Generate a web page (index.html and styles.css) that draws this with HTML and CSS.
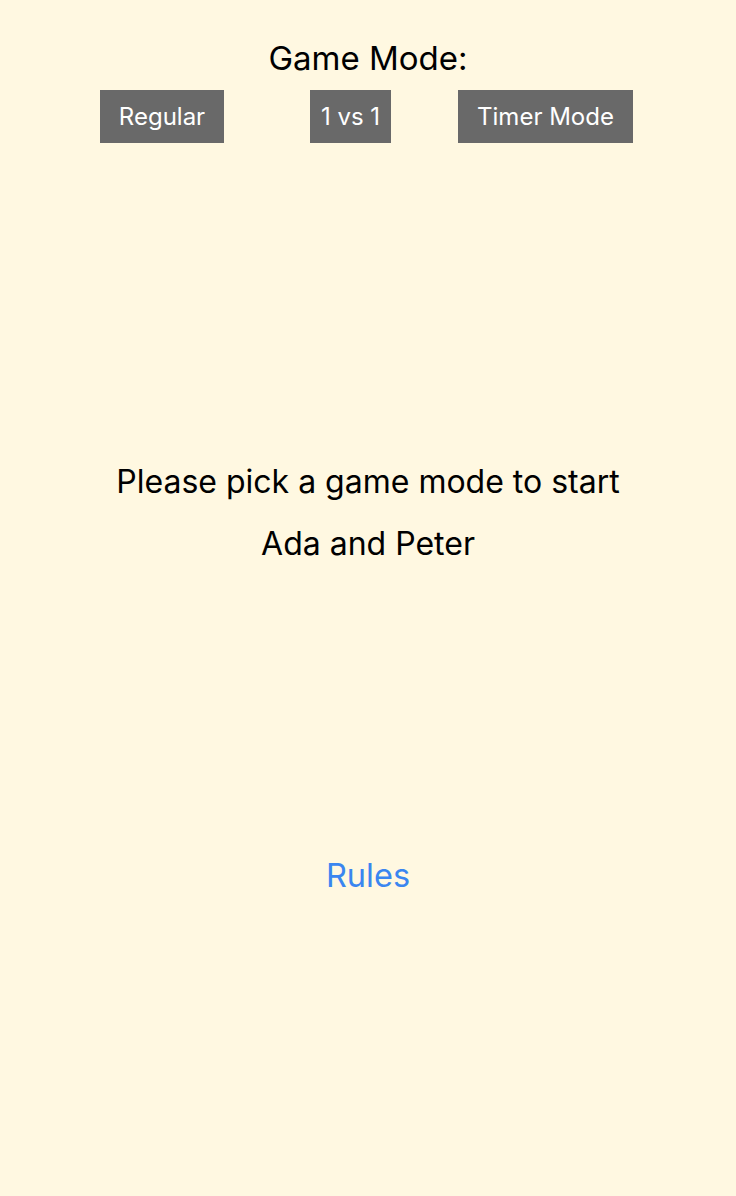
FILE: index.html
```html
<!DOCTYPE html>
<html>
<head>
<meta charset="utf-8">
<link rel="stylesheet" href="styles.css">
</head>
<body>
<main class="screen">
  <h1 class="title">Game Mode:</h1>
  <div class="modes">
    <button class="mode mode-regular">Regular</button>
    <button class="mode mode-vs">1 vs 1</button>
    <button class="mode mode-timer">Timer Mode</button>
  </div>
  <p class="prompt">Please pick a game mode to start</p>
  <p class="players">Ada and Peter</p>
  <a class="rules">Rules</a>
</main>
</body>
</html>
```

FILE: styles.css
```css
html, body {
  margin: 0;
  padding: 0;
  background: #fff8e1;
}
body {
  font-family: Inter, "Noto Sans", sans-serif;
  color: #000;
  width: 736px;
  height: 1196px;
}
.screen {
  display: flex;
  flex-direction: column;
  align-items: center;
}
.title {
  margin: 38px 0 0;
  font-size: 33px;
  font-weight: 400;
  line-height: 40px;
}
.modes {
  display: flex;
  align-self: stretch;
  padding-left: 100px;
  margin-top: 12px;
}
.mode {
  height: 53px;
  border: none;
  background: #696969;
  color: #fff;
  font-family: inherit;
  font-size: 24px;
  padding: 0;
}
.mode-regular { width: 124px; }
.mode-vs { width: 81px; margin-left: 86px; }
.mode-timer { width: 175px; margin-left: 67px; }
.prompt {
  margin: 319px 0 0;
  font-size: 32px;
  line-height: 40px;
}
.players {
  margin: 22px 0 0;
  font-size: 32px;
  line-height: 40px;
}
.rules {
  margin-top: 292px;
  font-size: 32.5px;
  line-height: 40px;
  color: #3a86f0;
}
```
